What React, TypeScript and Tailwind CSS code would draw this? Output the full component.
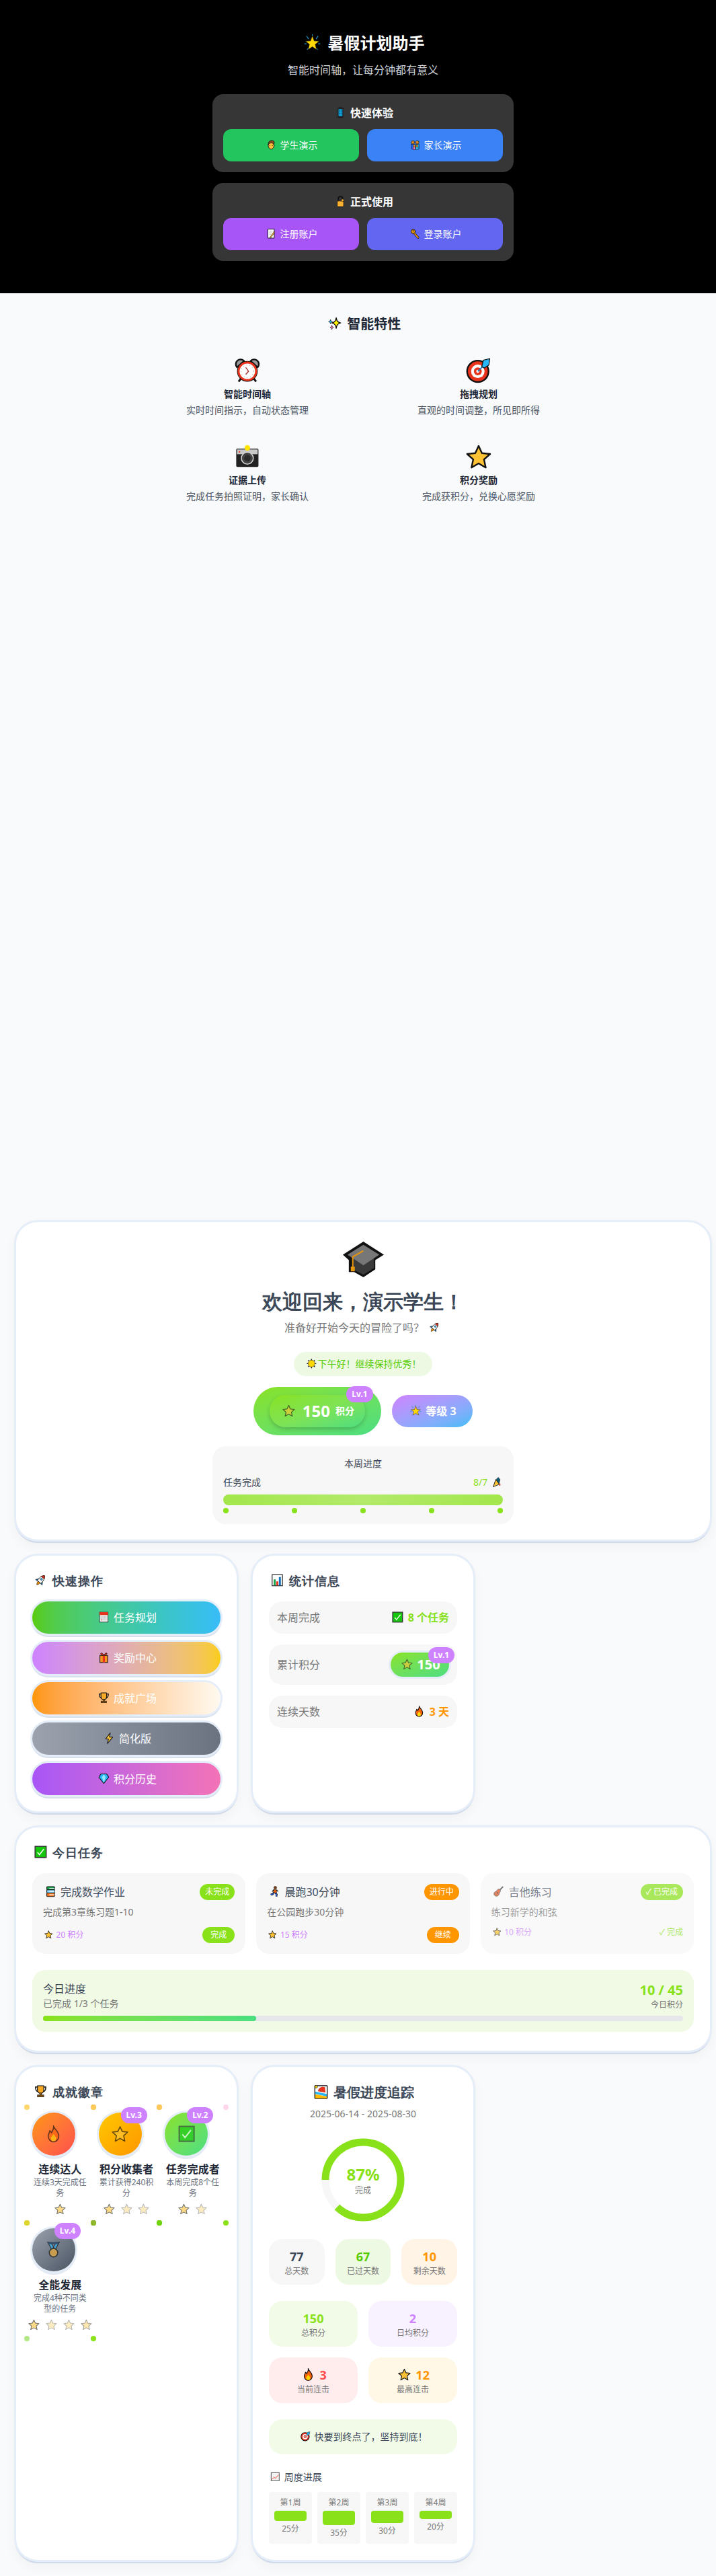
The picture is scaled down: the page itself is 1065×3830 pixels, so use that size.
import React from 'react'

const card = 'rounded-[32px] bg-white p-6 shadow-[0_0_0_3px_#e5edf9,0_3px_0_2px_#d0d9e8,0_8px_20px_rgba(15,23,42,0.05)]'
const heading = 'font-[family-name:cursive] text-lg font-bold leading-7 tracking-[1px] text-[#3c4858]'

// Outlined emoji, the packaged colour emoji font draws them differently
const o = { stroke: '#111', strokeWidth: 2, strokeLinejoin: 'round' as const, strokeLinecap: 'round' as const }
const icons: Record<string, React.ReactNode> = {
  star: <polygon points="16,2.500 20.200,11.600 30.500,12.700 22.800,19.600 25,29.800 16,24.600 7,29.800 9.200,19.600 1.500,12.700 11.800,11.600" fill="#fdc335" {...o} />,
  glow: (
    <>
      <path d="M5 3l4 6M27 3l-4 6M1 18h4M31 18h-4M16 0v3M6 29l3-3M26 29l-3-3" stroke="#1b8fbf" strokeWidth="1.5" />
      <polygon points="16,3 19.500,12.500 29,13 21.500,19 24,29 16,23.500 8,29 10.500,19 3,13 12.500,12.500" fill="#ffd800" stroke="#111" strokeWidth="0.8" />
    </>
  ),
  phone: (
    <>
      <rect x="8" y="1" width="16" height="30" rx="3" fill="#1f1f1f" />
      <rect x="10.500" y="6" width="11" height="20" fill="#0aa0d8" />
      <path d="M12 9h3M17 9h3M12 14h3M17 14h3M12 19h3M17 19h3" stroke="#0b3a55" strokeWidth="2" />
    </>
  ),
  boy: (
    <>
      <ellipse cx="16" cy="18" rx="9.500" ry="12" fill="#fbbf3a" {...o} />
      <path d="M6.500 15C6 6 12 2 18 2c5 0 8 3 8 6 0 3-1 5-1.500 7-2-4-5-5-9-5-4 0-7 2-8.500 5z" fill="#8a4b1d" {...o} />
      <circle cx="12" cy="18" r="1.300" fill="#111" />
      <circle cx="20" cy="18" r="1.300" fill="#111" />
    </>
  ),
  family: (
    <>
      <rect x="3" y="14" width="11" height="16" fill="#2563eb" stroke="#111" />
      <rect x="18" y="14" width="11" height="16" fill="#0ea5e9" stroke="#111" />
      <circle cx="9" cy="8" r="5.500" fill="#d98a1f" stroke="#111" strokeWidth="1.500" />
      <circle cx="23" cy="8" r="5.500" fill="#d98a1f" stroke="#111" strokeWidth="1.500" />
      <rect x="10" y="23" width="7" height="8" fill="#f472b6" stroke="#111" />
      <rect x="19" y="23" width="7" height="8" fill="#38bdf8" stroke="#111" />
      <circle cx="13.500" cy="19.500" r="3.500" fill="#f0a030" stroke="#111" />
      <circle cx="22.500" cy="19.500" r="3.500" fill="#f0a030" stroke="#111" />
    </>
  ),
  lock: (
    <>
      <path d="M10 16V8a6 6 0 0 1 12 0v8" fill="none" stroke="#111" strokeWidth="3.500" />
      <rect x="7" y="15" width="18" height="16" rx="2" fill="#f9b233" stroke="#111" strokeWidth="1.500" />
      <circle cx="22" cy="13" r="3.500" fill="#f9b233" stroke="#111" />
    </>
  ),
  memo: (
    <>
      <rect x="6" y="1.500" width="20" height="29" fill="#fff" {...o} />
      <path d="M10 8h10M10 13h7M10 18h5" stroke="#888" strokeWidth="1.500" />
      <path d="M25 9L13 26l-1 4 4-2L28 11z" fill="#f9b233" stroke="#111" strokeWidth="1.200" />
    </>
  ),
  key: (
    <>
      <path d="M12 13l14 16" stroke="#111" strokeWidth="7" strokeLinecap="round" />
      <path d="M12 13l14 16" stroke="#e8960c" strokeWidth="4" strokeLinecap="round" />
      <circle cx="10" cy="9" r="7" fill="#e8960c" {...o} />
      <circle cx="10" cy="7" r="2" fill="#111" />
    </>
  ),
  sparkles: (
    <>
      <path d="M20 2c1 7 3 10 10 12-7 2-9 5-10 12-1-7-3-10-10-12 7-2 9-5 10-12z" fill="#fff200" {...o} />
      <path d="M7 6c.5 3 1.500 4 4.500 5-3 1-4 2-4.500 5-.5-3-1.500-4-4.500-5 3-1 4-2 4.500-5z" fill="#1db8e8" stroke="#111" />
      <path d="M10 19c.5 3 1.500 4 4 5-2.500 1-3.500 2-4 5-.5-3-1.500-4-4-5 2.500-1 3.500-2 4-5z" fill="#f06fa8" stroke="#111" />
    </>
  ),
  alarm: (
    <>
      <path d="M3 12a6 6 0 0 1 9-8zM29 12a6 6 0 0 0-9-8z" fill="#999" {...o} />
      <path d="M8 26l-3 4M24 26l3 4" stroke="#111" strokeWidth="2.500" />
      <circle cx="16" cy="17" r="13" fill="#111" />
      <circle cx="16" cy="17" r="11" fill="#fff" stroke="#e8331c" strokeWidth="2.500" />
      <path d="M14 12l3.500 5-3.500 4" fill="none" stroke="#a33" strokeWidth="1.200" />
      <circle cx="16" cy="17" r="8" fill="none" stroke="#bbb" strokeDasharray="1 3" />
    </>
  ),
  target: (
    <>
      <circle cx="15" cy="17" r="14.500" fill="#111" />
      <circle cx="15" cy="17" r="12.500" fill="#e8331c" />
      <circle cx="15" cy="17" r="8.500" fill="#fff" />
      <circle cx="15" cy="17" r="5" fill="#e8331c" />
      <circle cx="15" cy="17" r="2" fill="#fff" />
      <path d="M15 17L25 7" stroke="#1173c0" strokeWidth="1.500" />
      <path d="M20 11l2-8 8-2-1 8-6 4z" fill="#29b6f6" stroke="#111" />
    </>
  ),
  camera: (
    <>
      <rect x="2" y="6" width="28" height="23" rx="1.500" fill="#222" />
      <rect x="3" y="7" width="26" height="6" fill="#c9c9c9" />
      <circle cx="16" cy="18" r="7.500" fill="#444" stroke="#ddd" strokeWidth="1.200" />
      <circle cx="16" cy="18" r="4" fill="#2a2a2a" />
      <circle cx="16" cy="5" r="3.500" fill="#ffe600" />
      <circle cx="6" cy="10" r="1" fill="#e8331c" />
    </>
  ),
  hat: (
    <>
      <path d="M16 3L31.500 13 25 17v7l-9 6-7-4H5v-9L.5 13z" fill="#111" />
      <path d="M8 15h16v8l-8 5-8-4z" fill="#3a3a3a" />
      <path d="M16 5.500L28 13 16 21 4 13z" fill="#777" />
      <path d="M16 10L8 14.500v8" fill="none" stroke="#e8960c" strokeWidth="1" />
      <rect x="6.500" y="22" width="3" height="3.500" fill="#e8960c" />
    </>
  ),
  rocket: (
    <g transform="rotate(40 16 16)">
      <path d="M10 16l-5 7h5zM22 16l5 7h-5z" fill="#1173c0" stroke="#111" />
      <path d="M12.500 22c0 4 2 7 3.500 9 1.500-2 3.500-5 3.500-9z" fill="#ff9600" stroke="#111" />
      <path d="M16 1c5 4 6 10 6 15v6H10v-6c0-5 1-11 6-15z" fill="#fff" stroke="#111" strokeWidth="1.500" />
      <path d="M16 1c2.500 2 4 4.500 5 7H11c1-2.500 2.500-5 5-7z" fill="#e8331c" stroke="#111" />
      <circle cx="16" cy="13" r="2.500" fill="#29b6f6" stroke="#111" />
    </g>
  ),
  sun: (
    <>
      <path d="M16 1v5M16 26v5M1 16h5M26 16h5M5.400 5.400l3.500 3.500M23.100 23.100l3.500 3.500M26.600 5.400l-3.500 3.500M8.900 23.100l-3.500 3.500" stroke="#111" strokeWidth="3" />
      <circle cx="16" cy="16" r="11" fill="#ffd800" stroke="#111" />
    </>
  ),
  check: (
    <>
      <rect x="2" y="2" width="28" height="28" fill="#16c60c" stroke="#333" strokeWidth="2.500" />
      <path d="M8 17l5 6 11-14" fill="none" stroke="#fff" strokeWidth="2.500" />
    </>
  ),
  flame: (
    <>
      <path d="M16 1c1 6 9 9 10 18 .6 6-4 12-10 12S5.400 25 6 19c.4-4 3-5 3-9 2 1 3 3 3 4 2-3 5-8 4-13z" fill="#f7630c" {...o} />
      <path d="M16 16c1 3 5 5 5 9 0 3-2 5-5 5s-5-2-5-5c0-4 4-5 5-9z" fill="#ffd800" />
    </>
  ),
  trophy: (
    <>
      <path d="M8 5H3c0 7 2 11 7 12M24 5h5c0 7-2 11-7 12" fill="none" stroke="#111" strokeWidth="2.500" />
      <path d="M8 2h16v10c0 6-4 9-8 9s-8-3-8-9z" fill="#f9a825" {...o} />
      <rect x="14" y="20" width="4" height="5" fill="#c77700" stroke="#111" />
      <rect x="8" y="25" width="16" height="5" fill="#7a4a10" stroke="#111" />
    </>
  ),
  calendar: (
    <>
      <rect x="4" y="2" width="24" height="28" fill="#eee" stroke="#222" strokeWidth="1.500" />
      <rect x="4" y="2" width="24" height="8" fill="#e8331c" />
      <path d="M7 15h18M7 19h18M7 23h18" stroke="#aaa" strokeWidth="2" strokeDasharray="2 1.500" />
      <circle cx="10" cy="24" r="1.500" fill="#e8331c" />
    </>
  ),
  gift: (
    <>
      <rect x="5" y="10" width="22" height="20" fill="#f7941d" {...o} />
      <rect x="13" y="10" width="6" height="20" fill="#e8331c" />
      <path d="M16 10c-3-8-9-8-9-5 0 3 5 5 9 5zm0 0c3-8 9-8 9-5 0 3-5 5-9 5z" fill="#e8331c" stroke="#111" strokeWidth="1.500" />
    </>
  ),
  bolt: <path d="M19 1L6 18h8l-3 13 15-18h-9z" fill="#fdc335" {...o} />,
  diamond: (
    <>
      <path d="M8 3h16l6 9-14 18L2 12z" fill="#29b6f6" {...o} />
      <path d="M11 12l5-8 5 8-5 16z" fill="#9ae6ff" />
    </>
  ),
  chart: (
    <>
      <rect x="3" y="2" width="26" height="28" fill="#fff" stroke="#222" strokeWidth="2" />
      <rect x="7" y="14" width="5" height="15" fill="#16a34a" />
      <rect x="13.500" y="19" width="5" height="10" fill="#e8331c" />
      <rect x="20" y="8" width="5" height="21" fill="#1173c0" />
    </>
  ),
  books: (
    <>
      <rect x="5" y="2" width="22" height="9" rx="2" fill="#16a34a" {...o} />
      <rect x="5" y="11" width="22" height="9" rx="2" fill="#7dd3fc" {...o} />
      <rect x="5" y="20" width="22" height="10" rx="2" fill="#f97316" {...o} />
      <path d="M12 6.500h15M12 15.500h15M12 25h15" stroke="#fff" strokeWidth="2" />
    </>
  ),
  runner: (
    <>
      <path d="M15 18l-5 6-5 0M18 19l4 5-1 6" fill="none" stroke="#111" strokeWidth="5" />
      <path d="M15 18l-5 6-5 0M18 19l4 5-1 6" fill="none" stroke="#2563eb" strokeWidth="2.500" />
      <path d="M13 10l8 1 1 9-9-1z" fill="#e8620c" stroke="#111" />
      <path d="M14 11l-5 5M21 11l5 5" stroke="#111" strokeWidth="2.500" />
      <circle cx="18" cy="5" r="4" fill="#7a3d10" stroke="#111" />
    </>
  ),
  guitar: (
    <>
      <path d="M19 12L29 2" stroke="#333" strokeWidth="3.500" />
      <path d="M20 10c3 3 2 7-1 9 0 6-5 11-10 10-5-1-7-6-5-10 2-3 5-2 7-5 1-3 5-7 9-4z" fill="#d9541e" stroke="#444" strokeWidth="1.500" />
      <circle cx="13" cy="20" r="2" fill="#333" />
    </>
  ),
  medal: (
    <>
      <path d="M5 2h6l7 13h-6zM27 2h-6l-7 13h6z" fill="#29b6f6" stroke="#111" strokeWidth="1.500" />
      <path d="M5 2h22l-2 3H7z" fill="#1d4f8a" stroke="#111" />
      <circle cx="16" cy="22" r="8" fill="#f9b233" {...o} />
    </>
  ),
  beach: (
    <>
      <rect x="2" y="1.500" width="28" height="29" rx="1" fill="#fff" {...o} />
      <path d="M3 15l26 5v6L3 20z" fill="#29b6f6" />
      <path d="M3 21l26 5v4H3z" fill="#ffb900" />
      <path d="M9 14C10 6 18 2 25 5l1 12z" fill="#e8331c" />
      <circle cx="5" cy="4" r="3" fill="#ffd800" stroke="#111" />
    </>
  ),
  chartup: (
    <>
      <rect x="3" y="3" width="26" height="26" fill="#fafafa" stroke="#666" strokeWidth="2.500" />
      <path d="M10 5v22M16 5v22M22 5v22M5 10h22M5 16h22M5 22h22" stroke="#ddd" />
      <path d="M5 25l7-7 5 3 10-11" fill="none" stroke="#e8331c" strokeWidth="2" />
    </>
  ),
  party: (
    <>
      <path d="M15 8l10 14 3-14-6-7z" fill="#0e5a74" stroke="#111" />
      <path d="M6 31L14 8l11 15z" fill="#fdc335" {...o} />
      <rect x="25" y="22" width="4" height="6" fill="#e8331c" />
    </>
  ),
}

function E({ n }: { n: string }) {
  return (
    <span className="inline-flex h-[1em] w-[1.37em] items-center justify-center align-[-0.13em]">
      <svg viewBox="0 0 32 32" className="h-[1.05em] w-[1.05em] shrink-0 overflow-visible">
        {icons[n]}
      </svg>
    </span>
  )
}

function Lv({ label }: { label: string }) {
  return (
    <span className="absolute -right-2 -top-2 z-10 flex h-6 w-[39px] items-center justify-center rounded-full bg-[#ce82ff] text-xs font-bold text-white">
      {label}
    </span>
  )
}

function HeroButton({ icon, label, color }: { icon: string; label: string; color: string }) {
  return (
    <button type="button" className={`h-12 rounded-xl text-sm text-white ${color}`}>
      <E n={icon} /> {label}
    </button>
  )
}

function Feature({ icon, title, desc }: { icon: string; title: string; desc: string }) {
  return (
    <div className="p-4 text-center">
      <div className="mb-1 text-4xl leading-10"><E n={icon} /></div>
      <h3 className="mb-1 text-sm font-semibold text-[#1f2937]">{title}</h3>
      <p className="text-sm text-[#4b5563]">{desc}</p>
    </div>
  )
}

function QuickButton({ icon, label, color }: { icon: string; label: string; color: string }) {
  return (
    <button
      type="button"
      className={`h-12 w-full rounded-full text-base text-white shadow-[0_0_0_3px_#e5edf9,0_3px_0_2px_#d8e0ee] ${color}`}
    >
      <E n={icon} /> {label}
    </button>
  )
}

function Task(props: {
  icon: string
  title: string
  desc: string
  points: number
  status: string
  statusColor: string
  action?: string
  done?: boolean
}) {
  return (
    <div className={`h-[120px] rounded-[20px] p-4 ${props.done ? 'bg-[#f7f7f7]/70' : 'bg-[#f7f7f7]'}`}>
      <div className={props.done ? 'opacity-70' : ''}>
        <div className="flex items-start justify-between">
          <span className="text-base leading-6 text-[#3c4858]"><E n={props.icon} /> {props.title}</span>
          <span className={`flex h-6 items-center rounded-full px-2 text-xs text-white ${props.statusColor}`}>
            {props.status}
          </span>
        </div>
        <p className="mt-2 text-sm leading-5 text-[#777777]">{props.desc}</p>
        <div className="mt-3 flex items-center justify-between">
          <span className="text-xs text-[#ce82ff]"><E n="star" /> {props.points} 积分</span>
          {props.action ? (
            <button type="button" className={`h-6 rounded-full px-3 text-xs text-white ${props.statusColor}`}>
              {props.action}
            </button>
          ) : (
            <span className="text-xs text-[#89e219]">✓ 完成</span>
          )}
        </div>
      </div>
    </div>
  )
}

function Badge(props: {
  icon: string
  name: string
  desc: string
  color: string
  level?: string
  stars: string[]
  dots: string[]
}) {
  return (
    <div className="relative h-[156px]">
      <span className={`absolute -left-3 -top-3 h-2 w-2 rounded-full ${props.dots[0]}`} />
      <span className={`absolute -right-3 -top-3 h-2 w-2 rounded-full ${props.dots[1]}`} />
      <span className={`absolute -bottom-3 -left-3 h-2 w-2 rounded-full ${props.dots[2]}`} />
      <span className={`absolute -bottom-3 -right-3 h-2 w-2 rounded-full ${props.dots[3]}`} />
      <div className={`relative flex h-16 w-16 items-center justify-center rounded-full shadow-[0_0_0_3px_#e5edf9,0_3px_0_2px_#e2e8f2] ${props.color}`}>
        {props.level && <Lv label={props.level} />}
        <span className="text-2xl leading-8 opacity-65"><E n={props.icon} /></span>
      </div>
      <div className="mt-2 text-center text-base font-bold leading-6 text-[#1f2937]">{props.name}</div>
      <p className="text-center text-xs text-[#6b7280]">{props.desc}</p>
      <div className="mt-1 flex justify-center gap-1 whitespace-nowrap text-base leading-6">
        {props.stars.map((s, i) => (
          <span key={i} className={s}><E n="star" /></span>
        ))}
      </div>
    </div>
  )
}

function Stat(props: { value: React.ReactNode; label: string; color: string; bg: string }) {
  return (
    <div className={`rounded-[20px] p-3 text-center ${props.bg}`}>
      <div className={`text-lg font-bold leading-7 ${props.color}`}>{props.value}</div>
      <div className="text-xs text-[#777777]">{props.label}</div>
    </div>
  )
}

const weeks = [
  { name: '第1周', points: 25 },
  { name: '第2周', points: 35 },
  { name: '第3周', points: 30 },
  { name: '第4周', points: 20 },
]

export default function App() {
  return (
    <div className="w-full overflow-hidden bg-[#f9fafb] font-['Noto_Sans','Noto_Sans_CJK_SC',sans-serif]">
      <div className="w-[1080px]">
        <section className="bg-black py-12 text-center">
          <h1 className="mb-3 text-2xl font-bold text-white"><E n="glow" /> 暑假计划助手</h1>
          <p className="mb-6 text-base text-[#d1d5db]">智能时间轴，让每分钟都有意义</p>
          <div className="mx-auto flex w-[448px] flex-col gap-4">
            <div className="rounded-2xl bg-[#363636] p-4">
              <h2 className="mb-3 text-base font-semibold text-white"><E n="phone" /> 快速体验</h2>
              <div className="grid grid-cols-2 gap-3">
                <HeroButton icon="boy" label="学生演示" color="bg-[#22c55e]" />
                <HeroButton icon="family" label="家长演示" color="bg-[#3b82f6]" />
              </div>
            </div>
            <div className="rounded-2xl bg-[#363636] p-4">
              <h2 className="mb-3 text-base font-semibold text-white"><E n="lock" /> 正式使用</h2>
              <div className="grid grid-cols-2 gap-3">
                <HeroButton icon="memo" label="注册账户" color="bg-[#a855f7]" />
                <HeroButton icon="key" label="登录账户" color="bg-[#6366f1]" />
              </div>
            </div>
          </div>
        </section>

        <section className="h-[1357px] pt-8">
          <h2 className="mb-5 text-center text-xl font-bold text-[#1f2937]"><E n="sparkles" /> 智能特性</h2>
          <div className="mx-auto grid w-[680px] grid-cols-2 gap-2">
            <Feature icon="alarm" title="智能时间轴" desc="实时时间指示，自动状态管理" />
            <Feature icon="target" title="拖拽规划" desc="直观的时间调整，所见即所得" />
            <Feature icon="camera" title="证据上传" desc="完成任务拍照证明，家长确认" />
            <Feature icon="star" title="积分奖励" desc="完成获积分，兑换心愿奖励" />
          </div>
        </section>

        <main className="flex flex-col gap-6 p-6">
          <section className={`${card} h-[472px] text-center`}>
            <div className="text-6xl leading-[60px]"><E n="hat" /></div>
            <h1 className="mt-4 font-[family-name:cursive] text-3xl font-bold leading-9 text-[#3c4858]">欢迎回来，演示学生！</h1>
            <p className="mt-2 text-base text-[#777777]">准备好开始今天的冒险了吗？ <E n="rocket" /></p>
            <div className="mt-6 flex justify-center">
              <div className="flex h-9 items-center rounded-full bg-[#eef9e4] px-4 text-sm text-[#58cc02]"><E n="sun" /> 下午好！继续保持优秀！</div>
            </div>
            <div className="mt-4 flex items-center justify-center gap-4">
              <div className="relative rounded-full bg-linear-to-br from-[#89e219] to-[#4ade80] px-6 py-3">
                <div className="flex h-12 w-[142px] items-center justify-center gap-2 rounded-full bg-linear-to-br from-[#89e219] via-[#7fe353] to-[#4ade80] font-bold text-white shadow-[0_3px_6px_rgba(0,0,0,0.2)]">
                  <span className="text-lg opacity-60"><E n="star" /></span>
                  <span className="text-2xl">150</span>
                  <span className="text-sm">积分</span>
                </div>
                <span className="absolute right-3 -top-px flex h-6 w-10 items-center justify-center rounded-full bg-[#ce82ff] text-xs font-bold text-white">Lv.1</span>
              </div>
              <div className="flex h-12 w-[120px] items-center justify-center gap-1 rounded-full bg-linear-to-br from-[#ce82ff] to-[#38bdf8] text-base font-bold text-white"><E n="glow" /> 等级 3</div>
            </div>
            <div className="mx-auto mt-4 w-[448px] rounded-[20px] bg-[#f7f7f7] p-4">
              <div className="text-sm text-[#3c4858]">本周进度</div>
              <div className="mt-2 flex items-center justify-between text-sm">
                <span className="text-[#3c4858]">任务完成</span>
                <span className="text-[#89e219]">8/7 <E n="party" /></span>
              </div>
              <div className="mt-2 h-4 rounded-full bg-linear-to-r from-[#a3e64b] via-[#b3ea6a] to-[#a3e64b]" />
              <div className="mt-1 flex justify-between">
                {[0, 1, 2, 3, 4].map((i) => (
                  <span key={i} className="h-2 w-2 rounded-full bg-[#89e219]" />
                ))}
              </div>
            </div>
          </section>

          <div className="grid h-[380px] grid-cols-3 gap-6">
            <section className={card}>
              <h3 className={`${heading} mb-4`}><E n="rocket" /> 快速操作</h3>
              <div className="flex flex-col gap-3">
                <QuickButton icon="calendar" label="任务规划" color="bg-linear-to-r from-[#58cc02] to-[#38bdf8]" />
                <QuickButton icon="gift" label="奖励中心" color="bg-linear-to-r from-[#ce82ff] to-[#facc15]" />
                <QuickButton icon="trophy" label="成就广场" color="bg-linear-to-r from-[#ff9600] to-[#fffaf0]" />
                <QuickButton icon="bolt" label="简化版" color="bg-linear-to-r from-[#9ca3af] to-[#6b7280]" />
                <QuickButton icon="diamond" label="积分历史" color="bg-linear-to-r from-[#a855f7] to-[#f472b6]" />
              </div>
            </section>
            <section className={card}>
              <h3 className={`${heading} mb-4`}><E n="chart" /> 统计信息</h3>
              <div className="flex flex-col gap-4 text-base">
                <div className="flex h-12 items-center justify-between rounded-[20px] bg-[#f7f7f7] px-3">
                  <span className="text-[#777777]">本周完成</span>
                  <span className="font-bold text-[#89e219]"><E n="check" /> 8 个任务</span>
                </div>
                <div className="flex h-[60px] items-center justify-between rounded-[20px] bg-[#f7f7f7] px-3">
                  <span className="text-[#777777]">累计积分</span>
                  <span className="relative flex h-9 w-[87px] items-center justify-center gap-1 rounded-full bg-linear-to-br from-[#89e219] to-[#4ade80] text-xl font-bold text-white shadow-[0_0_0_3px_#e5edf9]">
                    <span className="text-base opacity-60"><E n="star" /></span>150
                    <Lv label="Lv.1" />
                  </span>
                </div>
                <div className="flex h-12 items-center justify-between rounded-[20px] bg-[#f7f7f7] px-3">
                  <span className="text-[#777777]">连续天数</span>
                  <span className="font-bold text-[#ff9600]"><E n="flame" /> 3 天</span>
                </div>
              </div>
            </section>
          </div>

          <section className={`${card} h-[332px]`}>
            <h3 className={`${heading} mb-4`}><E n="check" /> 今日任务</h3>
            <div className="grid grid-cols-3 gap-4">
              <Task icon="books" title="完成数学作业" desc="完成第3章练习题1-10" points={20} status="未完成" statusColor="bg-[#89e219]" action="完成" />
              <Task icon="runner" title="晨跑30分钟" desc="在公园跑步30分钟" points={15} status="进行中" statusColor="bg-[#ff9600]" action="继续" />
              <Task icon="guitar" title="吉他练习" desc="练习新学的和弦" points={10} status="✓ 已完成" statusColor="bg-[#89e219]" done />
            </div>
            <div className="mt-6 rounded-[20px] bg-[#f0fae5] p-4">
              <div className="flex justify-between">
                <div>
                  <div className="text-base leading-6 text-[#3c4858]">今日进度</div>
                  <div className="text-sm leading-5 text-[#777777]">已完成 1/3 个任务</div>
                </div>
                <div className="text-right">
                  <div className="text-xl font-bold leading-7 text-[#89e219]">10 / 45</div>
                  <div className="text-xs leading-4 text-[#777777]">今日积分</div>
                </div>
              </div>
              <div className="mt-2 h-2 rounded-full bg-[#e5e7eb]">
                <div className="h-2 w-1/3 rounded-full bg-linear-to-r from-[#89e219] to-[#4ade80]" />
              </div>
            </div>
          </section>

          <div className="grid h-[733px] grid-cols-3 gap-6">
            <section className={card}>
              <h3 className={`${heading} mb-4`}><E n="trophy" /> 成就徽章</h3>
              <div className="grid grid-cols-3 gap-4">
                <Badge icon="flame" name="连续达人" desc="连续3天完成任务" color="bg-linear-to-br from-[#ff9600] to-[#ff4b4b]" stars={['opacity-60']} dots={['bg-[#ffd76a]', 'bg-[#ffc95c]', 'bg-[#dfd52f]', 'bg-[#8fb82f]']} />
                <Badge icon="star" name="积分收集者" desc="累计获得240积分" color="bg-linear-to-br from-[#ffc800] to-[#ff9600]" level="Lv.3" stars={['opacity-60', 'opacity-30', 'opacity-30']} dots={['bg-[#ffc95c]', 'bg-[#ffc65c]', 'bg-[#8fb82f]', 'bg-[#6fd40f]']} />
                <Badge icon="check" name="任务完成者" desc="本周完成8个任务" color="bg-linear-to-br from-[#89e219] to-[#4ade80]" level="Lv.2" stars={['opacity-60', 'opacity-30']} dots={['bg-[#ffc65c]', 'bg-[#ffd6ec]', 'bg-[#6fd40f]', 'bg-[#89e219]']} />
                <Badge icon="medal" name="全能发展" desc="完成4种不同类型的任务" color="bg-linear-to-br from-[#9ca3af] to-[#4b5563]" level="Lv.4" stars={['opacity-60', 'opacity-30', 'opacity-30', 'opacity-40']} dots={['bg-[#dfd52f]', 'bg-[#8fb82f]', 'bg-[#b2e888]', 'bg-[#89e219]']} />
              </div>
            </section>

            <section className={card}>
              <div className="text-center">
                <h3 className="font-[family-name:cursive] text-xl font-bold leading-7 text-[#3c4858]"><E n="beach" /> 暑假进度追踪</h3>
                <p className="mt-2 text-sm text-[#777777]">2025-06-14 - 2025-08-30</p>
              </div>
              <div className="relative mx-auto mt-6 h-32 w-32">
                <svg viewBox="0 0 128 128" className="h-32 w-32 rotate-180">
                  <circle cx="64" cy="64" r="56" fill="none" stroke="#f7f7f7" strokeWidth="11" />
                  <circle cx="64" cy="64" r="56" fill="none" stroke="#89e219" strokeWidth="11" strokeDasharray="306 352" />
                </svg>
                <div className="absolute inset-0 flex flex-col items-center justify-center">
                  <span className="text-2xl font-bold leading-8 text-[#89e219]">87%</span>
                  <span className="text-xs text-[#777777]">完成</span>
                </div>
              </div>
              <div className="mt-6 grid grid-cols-3 gap-4">
                <Stat value="77" label="总天数" color="text-[#3c4858]" bg="bg-[#f7f7f7]" />
                <Stat value="67" label="已过天数" color="text-[#58cc02]" bg="bg-[#eef9e4]" />
                <Stat value="10" label="剩余天数" color="text-[#ff9600]" bg="bg-[#fff4e6]" />
              </div>
              <div className="mt-6 grid grid-cols-2 gap-4">
                <Stat value="150" label="总积分" color="text-[#89e219]" bg="bg-[#f2fbe7]" />
                <Stat value="2" label="日均积分" color="text-[#ce82ff]" bg="bg-[#f8f1ff]" />
                <Stat value={<><E n="flame" /> 3</>} label="当前连击" color="text-[#ff4b4b]" bg="bg-[#ffedee]" />
                <Stat value={<><E n="star" /> 12</>} label="最高连击" color="text-[#ff9600]" bg="bg-[#fff8e6]" />
              </div>
              <div className="mt-6 rounded-[20px] bg-[#f2fbe7] p-4 text-center text-sm text-[#3c4858]"><E n="target" /> 快要到终点了，坚持到底！</div>
              <h4 className="mt-6 text-sm text-[#3c4858]"><E n="chartup" /> 周度进展</h4>
              <div className="mt-3 grid grid-cols-4 gap-2">
                {weeks.map((w) => (
                  <div key={w.name} className="rounded bg-[#f7f7f7] p-2 text-center text-xs text-[#777777]">
                    <div>{w.name}</div>
                    <div className="mt-1 rounded-sm bg-[#89e219]" style={{ height: w.points * 0.6 }} />
                    <div className="mt-1">{w.points}分</div>
                  </div>
                ))}
              </div>
            </section>
          </div>
        </main>
      </div>
    </div>
  )
}
